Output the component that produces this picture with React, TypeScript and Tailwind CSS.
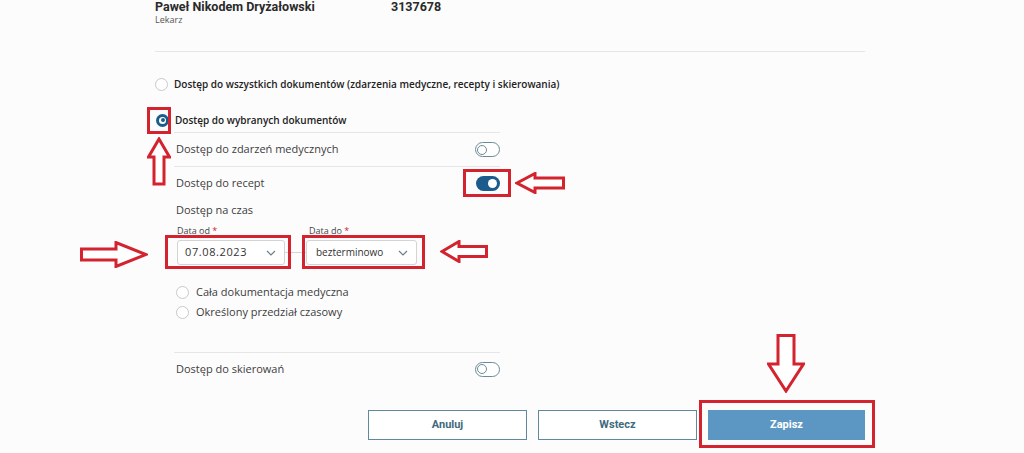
import React from 'react';

const RED = '#d3232f';

const Toggle: React.FC<{ on?: boolean }> = ({ on }) =>
  on ? (
    <div className="w-[24px] h-[15px] rounded-full bg-[#1c5c8c] flex items-center justify-end pr-[3px]">
      <div className="w-[9px] h-[9px] rounded-full bg-white" />
    </div>
  ) : (
    <div className="w-[25px] h-[15px] rounded-full border-[1.5px] border-[#6b8c95] bg-white flex items-center pl-[1px]">
      <div className="w-[10px] h-[10px] rounded-full border-[1.5px] border-[#6b8c95]" />
    </div>
  );

const Radio: React.FC<{ checked?: boolean }> = ({ checked }) =>
  checked ? (
    <div className="w-[13px] h-[13px] rounded-full bg-[#1c5c8c] flex items-center justify-center shrink-0">
      <div className="w-[7px] h-[7px] rounded-full bg-white flex items-center justify-center">
        <div className="w-[4px] h-[4px] rounded-full bg-[#1c5c8c]" />
      </div>
    </div>
  ) : (
    <div className="w-[13px] h-[13px] rounded-full border border-[#c9c9c9] bg-white shrink-0" />
  );

const Chevron = () => (
  <svg width="10" height="6" viewBox="0 0 10 6" fill="none" stroke="#6d7f88" strokeWidth="1.2">
    <path d="M1 1l4 4 4-4" />
  </svg>
);

const Arrow: React.FC<{ points: string; w: number; h: number; className: string }> = ({ points, w, h, className }) => (
  <svg width={w} height={h} viewBox={`0 0 ${w} ${h}`} className={`absolute ${className}`}>
    <polygon points={points} fill="white" stroke={RED} strokeWidth="3" strokeLinejoin="miter" />
  </svg>
);

export default function App() {
  return (
    <div className="relative w-[1024px] h-[453px] overflow-hidden bg-[#fcfcfc] text-[#3d3d3d]" style={{ fontFamily: '"Open Sans", sans-serif' }}>
      <div className="ml-[155px] w-[710px]">
        {/* header */}
        <div className="h-[52px] border-b border-[#e6e6e6]">
          <div className="flex" style={{ fontFamily: 'Roboto, sans-serif' }}>
            <div className="w-[236px] text-[12.5px] leading-[14px] font-bold text-[#2a2a2a]">Paweł Nikodem Dryżałowski</div>
            <div className="text-[12.5px] leading-[14px] font-bold text-[#2a2a2a]">3137678</div>
          </div>
          <div className="text-[9px] leading-[12px] text-[#555]">Lekarz</div>
        </div>

        {/* access options */}
        <div className="mt-[20px] h-[24px] flex items-center gap-[6px]">
          <Radio />
          <span className="text-[10px] font-semibold text-[#222]">Dostęp do wszystkich dokumentów (zdarzenia medyczne, recepty i skierowania)</span>
        </div>
        <div className="mt-[12px] h-[24px] flex items-center gap-[6px] ml-[1px]">
          <Radio checked />
          <span className="text-[10px] font-semibold text-[#222]">Dostęp do wybranych dokumentów</span>
        </div>

        <div className="ml-[19px] w-[326px] border-t border-[#e6e6e6]">
          <div className="h-[34px] flex items-center justify-between border-b border-[#e6e6e6] pl-[2px]">
            <span className="text-[11px]">Dostęp do zdarzeń medycznych</span>
            <Toggle />
          </div>
          <div className="h-[32px] flex items-center justify-between pl-[2px]">
            <span className="text-[11px]">Dostęp do recept</span>
            <Toggle on />
          </div>
          <div className="h-[22px] flex items-center pl-[2px]">
            <span className="text-[11px]">Dostęp na czas</span>
          </div>

          <div className="flex items-end ml-[3px] mt-[4px]">
            <div className="w-[108px]">
              <div className="text-[9px] leading-[12px] text-[#444]">Data od <span className="text-[#d3232f]">*</span></div>
              <div className="mt-[3px] h-[25px] border border-[#d4d4d4] rounded-[3px] bg-white flex items-center justify-between pl-[7px] pr-[8px]">
                <span className="text-[11px] tracking-[0.6px] text-[#333]">07.08.2023</span>
                <Chevron />
              </div>
            </div>
            <div className="w-[21px] h-[13px] border-t border-[#d4d4d4]" />
            <div className="w-[111px]">
              <div className="text-[9px] leading-[12px] text-[#444] pl-[3px]">Data do <span className="text-[#d3232f]">*</span></div>
              <div className="mt-[3px] h-[25px] border border-[#d4d4d4] rounded-[3px] bg-white flex items-center justify-between pl-[9px] pr-[8px]">
                <span className="text-[10px] text-[#333]">bezterminowo</span>
                <Chevron />
              </div>
            </div>
          </div>

          <div className="mt-[17px] h-[20px] flex items-center gap-[7px] pl-[2px]">
            <Radio />
            <span className="text-[11px]">Cała dokumentacja medyczna</span>
          </div>
          <div className="h-[21px] flex items-center gap-[7px] pl-[2px]">
            <Radio />
            <span className="text-[11px]">Określony przedział czasowy</span>
          </div>

          <div className="mt-[29px] border-t border-[#e6e6e6] h-[33px] flex items-center justify-between pl-[2px]">
            <span className="text-[11px]">Dostęp do skierowań</span>
            <Toggle />
          </div>
        </div>

        {/* buttons */}
        <div className="mt-[25px] flex justify-end gap-[11px]" style={{ fontFamily: 'Roboto, sans-serif' }}>
          <button className="w-[159px] h-[30px] border border-[#5f8a9c] bg-white text-[11px] font-bold text-[#3f6a80]">Anuluj</button>
          <button className="w-[159px] h-[30px] border border-[#5f8a9c] bg-white text-[11px] font-bold text-[#3f6a80]">Wstecz</button>
          <button className="w-[157px] h-[30px] bg-[#5b97c2] text-[11px] font-bold text-white">Zapisz</button>
        </div>
      </div>

      {/* annotation overlays */}
      <div className="absolute left-[147px] top-[107px] w-[24px] h-[27px] border-[3px] border-[#d3232f]" />
      <div className="absolute left-[463px] top-[169px] w-[48px] h-[28px] border-[3px] border-[#d3232f]" />
      <div className="absolute left-[165px] top-[235px] w-[126px] h-[34px] border-[3px] border-[#d3232f]" />
      <div className="absolute left-[302px] top-[235px] w-[123px] h-[34px] border-[3px] border-[#d3232f]" />
      <div className="absolute left-[699px] top-[400px] w-[176px] h-[48px] border-[3px] border-[#d3232f]" />

      <Arrow className="left-[147px] top-[137px]" w={24} h={49} points="12,2 22.5,20 17,20 17,47 7,47 7,20 1.5,20" />
      <Arrow className="left-[515px] top-[172px]" w={50} h={22} points="2,11 20,1.5 20,6 48.5,6 48.5,16 20,16 20,20.5" />
      <Arrow className="left-[440px] top-[240px]" w={48} h={23} points="2,11.5 19,1.5 19,6.5 46.5,6.5 46.5,16.5 19,16.5 19,21.5" />
      <Arrow className="left-[80px] top-[241px]" w={68} h={27} points="1.5,8 36,8 36,1.5 66,13.5 36,25.5 36,19 1.5,19" />
      <Arrow className="left-[767px] top-[334px]" w={38} h={59} points="11,1.5 27,1.5 27,30 36.5,30 19,57 1.5,30 11,30" />
    </div>
  );
}
